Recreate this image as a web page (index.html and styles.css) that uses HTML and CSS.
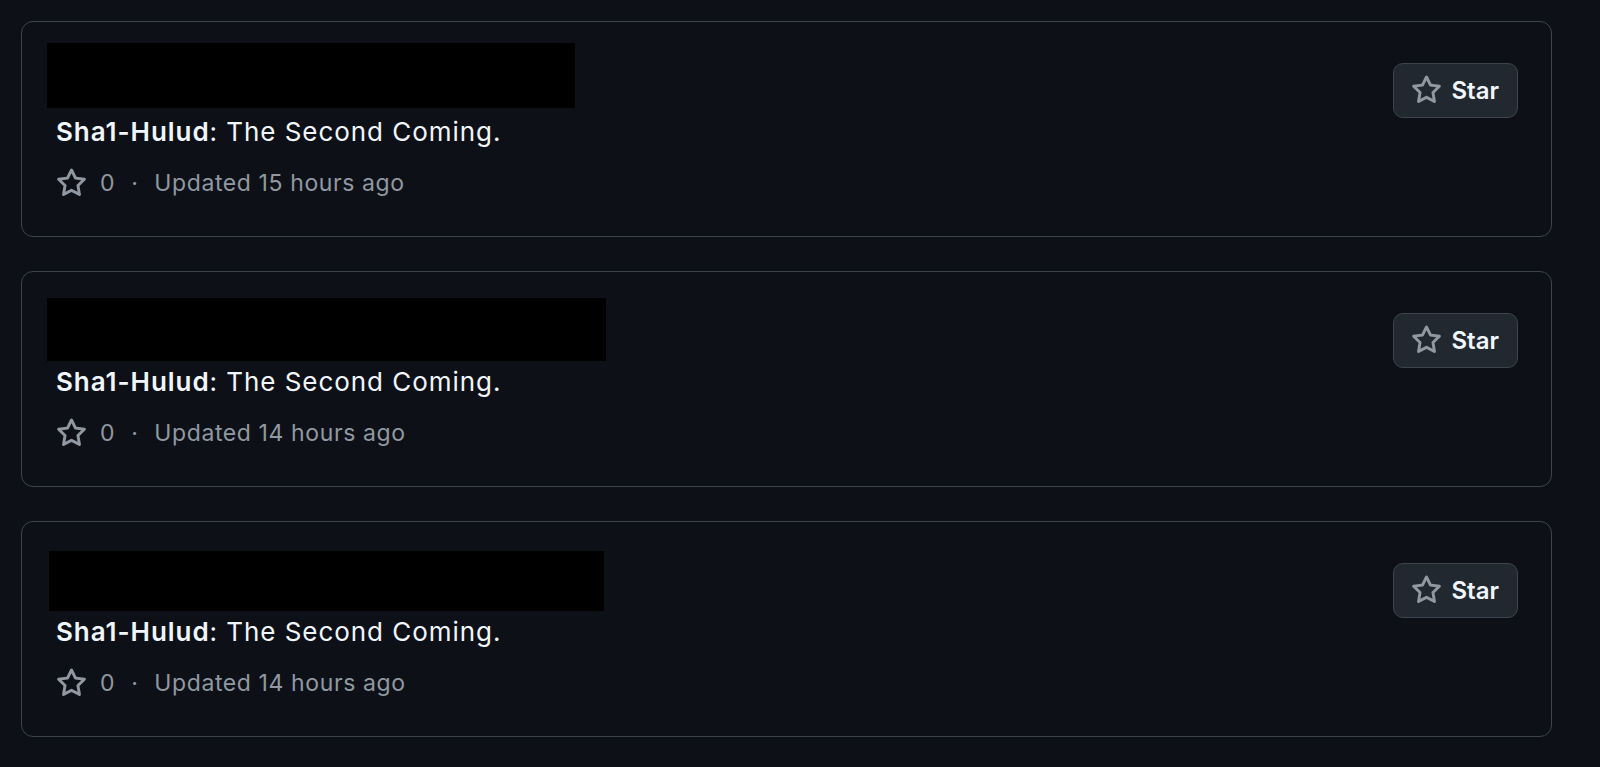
FILE: index.html
```html
<!DOCTYPE html>
<html>
<head>
<title>Repositories</title>
<link rel="stylesheet" href="styles.css">
</head>
<body>
<svg width="0" height="0" class="defs">
  <symbol id="star" viewBox="0 0 16 16">
    <path d="M8 .25a.75.75 0 0 1 .673.418l1.882 3.815 4.21.612a.75.75 0 0 1 .416 1.279l-3.046 2.97.719 4.192a.751.751 0 0 1-1.088.791L8 12.347l-3.766 1.98a.75.75 0 0 1-1.088-.79l.72-4.194L.818 6.374a.75.75 0 0 1 .416-1.28l4.21-.611L7.327.668A.75.75 0 0 1 8 .25Zm0 2.445L6.615 5.5a.75.75 0 0 1-.564.41l-3.097.45 2.24 2.184a.75.75 0 0 1 .216.664l-.528 3.084 2.769-1.456a.75.75 0 0 1 .698 0l2.77 1.456-.53-3.084a.75.75 0 0 1 .216-.664l2.24-2.183-3.096-.45a.75.75 0 0 1-.564-.41L8 2.694Z"/>
  </symbol>
</svg>

<div class="repoList">

  <div class="repoCard">
    <div class="repoInfo">
      <div class="repoName"><div class="redact redact1"></div></div>
      <p class="repoDesc"><b>Sha1-Hulud</b>: The Second Coming.</p>
      <div class="repoMeta">
        <span class="stars"><svg class="starIcon"><use href="#star"/></svg>0</span>
        <span class="sep">·</span>
        <span>Updated 15 hours ago</span>
      </div>
    </div>
    <button class="starButton"><svg class="starIcon"><use href="#star"/></svg>Star</button>
  </div>

  <div class="repoCard">
    <div class="repoInfo">
      <div class="repoName"><div class="redact redact2"></div></div>
      <p class="repoDesc"><b>Sha1-Hulud</b>: The Second Coming.</p>
      <div class="repoMeta">
        <span class="stars"><svg class="starIcon"><use href="#star"/></svg>0</span>
        <span class="sep">·</span>
        <span>Updated 14 hours ago</span>
      </div>
    </div>
    <button class="starButton"><svg class="starIcon"><use href="#star"/></svg>Star</button>
  </div>

  <div class="repoCard">
    <div class="repoInfo">
      <div class="repoName"><div class="redact redact3"></div></div>
      <p class="repoDesc"><b>Sha1-Hulud</b>: The Second Coming.</p>
      <div class="repoMeta">
        <span class="stars"><svg class="starIcon"><use href="#star"/></svg>0</span>
        <span class="sep">·</span>
        <span>Updated 14 hours ago</span>
      </div>
    </div>
    <button class="starButton"><svg class="starIcon"><use href="#star"/></svg>Star</button>
  </div>

</div>
</body>
</html>
```

FILE: styles.css
```css
body {
  margin: 0;
  font-family: Inter, "Noto Sans", sans-serif;
  background-color: #0d1117;
  color: #f0f6fc;
}

.defs {
  position: absolute;
}

.repoList {
  display: flex;
  flex-direction: column;
  gap: 34px;
  padding: 21px 48px 0 21px;
}

.repoCard {
  display: flex;
  align-items: flex-start;
  height: 216px;
  box-sizing: border-box;
  padding: 21px 33px 0 25px;
  border: 1px solid #3d444d;
  border-radius: 12px;
}

.repoInfo {
  flex: 1;
}

.repoName {
  display: flow-root;
  height: 68px;
}

.redact {
  background-color: #000;
}

.redact1 {
  width: 528px;
  height: 65px;
}

.redact2 {
  width: 559px;
  height: 63px;
  margin-top: 5px;
}

.redact3 {
  width: 555px;
  height: 60px;
  margin-top: 8px;
  margin-left: 2px;
}

.repoDesc {
  margin: 3px 0 0 9px;
  font-size: 26px;
  line-height: 36px;
  letter-spacing: 0.95px;
}

.repoDesc b {
  font-weight: 600;
}

.repoMeta {
  display: flex;
  align-items: center;
  height: 36px;
  margin: 15px 0 0 9px;
  font-size: 23px;
  letter-spacing: 0.6px;
  color: #9198a1;
}

.stars {
  display: flex;
  align-items: center;
  gap: 13px;
}

.starIcon {
  width: 31px;
  height: 31px;
  fill: currentColor;
}

.sep {
  margin: 0 16px;
}

.starButton {
  display: flex;
  align-items: center;
  gap: 9px;
  height: 55px;
  margin-top: 20px;
  padding: 0 18px 0 17px;
  font-family: inherit;
  font-size: 24px;
  font-weight: 600;
  color: #f0f6fc;
  background-color: #212830;
  border: 1px solid #3d444d;
  border-radius: 10px;
}

.starButton .starIcon {
  color: #9198a1;
}
```
